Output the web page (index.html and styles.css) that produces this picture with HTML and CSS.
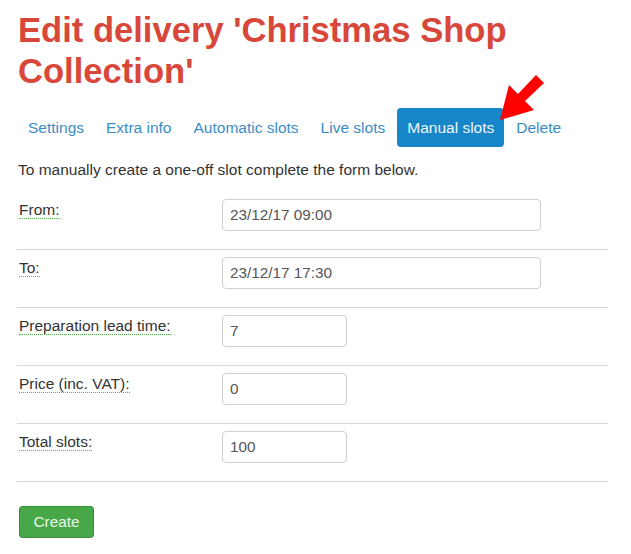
FILE: index.html
```html
<!DOCTYPE html>
<html lang="en">
<head>
  <meta charset="UTF-8" />
  <title>Edit delivery</title>
  <meta name="viewport" content="width=device-width, initial-scale=1.0" />
  <link rel="stylesheet" href="styles.css">
</head>
<body>
  <div class="page">
    <h1 class="title">Edit delivery 'Christmas Shop Collection'</h1>

    <ul class="tabs">
      <li><a href="#">Settings</a></li>
      <li><a href="#">Extra info</a></li>
      <li><a href="#">Automatic slots</a></li>
      <li><a href="#">Live slots</a></li>
      <li class="active"><a href="#">Manual slots</a></li>
      <li><a href="#">Delete</a></li>
    </ul>

    <!-- red pointer drawn over the screenshot -->
    <svg class="pointer" width="60" height="55" viewBox="0 0 60 55">
      <polygon points="10,50 44,40 35,31 54,13 46,5 28,24 19,15" fill="#ff0000" />
    </svg>

    <p class="intro">To manually create a one-off slot complete the form below.</p>

    <form class="slot-form">
      <div class="row">
        <label class="label"><span class="hint">From:</span></label>
        <input class="input wide" type="text" value="23/12/17 09:00" />
      </div>
      <div class="row">
        <label class="label"><span class="hint">To:</span></label>
        <input class="input wide" type="text" value="23/12/17 17:30" />
      </div>
      <div class="row">
        <label class="label"><span class="hint">Preparation lead time:</span></label>
        <input class="input short" type="text" value="7" />
      </div>
      <div class="row">
        <label class="label"><span class="hint">Price (inc. VAT):</span></label>
        <input class="input short" type="text" value="0" />
      </div>
      <div class="row">
        <label class="label"><span class="hint">Total slots:</span></label>
        <input class="input short" type="text" value="100" />
      </div>

      <div class="actions">
        <button class="btn-create" type="button">Create</button>
      </div>
    </form>
  </div>
</body>
</html>
```

FILE: styles.css
```css
html, body {
  margin: 0;
  padding: 0;
  background: #fff;
  font-family: "Liberation Sans", Arial, sans-serif;
  font-size: 15.5px;
  color: #333;
}

.page {
  position: relative;
  padding: 0 23px 0 17px;
}

.title {
  margin: 10px 0 0 1px;
  font-size: 34.6px;
  line-height: 41px;
  font-weight: bold;
  color: #d8473a;
}

.tabs {
  list-style: none;
  margin: 16px 0 0 1px;
  padding: 0;
  display: flex;
  gap: 2px;
}

.tabs a {
  display: block;
  padding: 9px 10px;
  line-height: 21px;
  color: #3a8dc6;
  text-decoration: none;
  border-radius: 4px;
}

.tabs .active a {
  background: #1786c8;
  color: #eef6fc;
}

.pointer {
  position: absolute;
  left: 490px;
  top: 60px;
}

.intro {
  margin: 12px 0 12px 1px;
  line-height: 21px;
}

.row {
  display: flex;
  align-items: flex-start;
  padding: 7px 0 18px 2px;
  border-bottom: 1px solid #d6d6d6;
}

.label {
  width: 202px;
  flex-shrink: 0;
  line-height: 21px;
}

.hint {
  border-bottom: 1px dotted #4cbb4c;
}

.input {
  box-sizing: border-box;
  height: 32px;
  padding: 0 7px;
  margin-left: 1px;
  border: 1px solid #cfcfcf;
  border-radius: 4px;
  font-family: inherit;
  font-size: 15.3px;
  color: #555;
  background: #fff;
}

.wide {
  width: 319px;
}

.short {
  width: 125px;
}

.actions {
  padding: 24px 0 0 2px;
}

.btn-create {
  box-sizing: border-box;
  height: 32px;
  width: 75px;
  padding: 0;
  border: 1px dotted #2e6e2e;
  border-radius: 4px;
  background: #48a848;
  color: #eaf6ea;
  font-family: inherit;
  font-size: 15.3px;
}
```
